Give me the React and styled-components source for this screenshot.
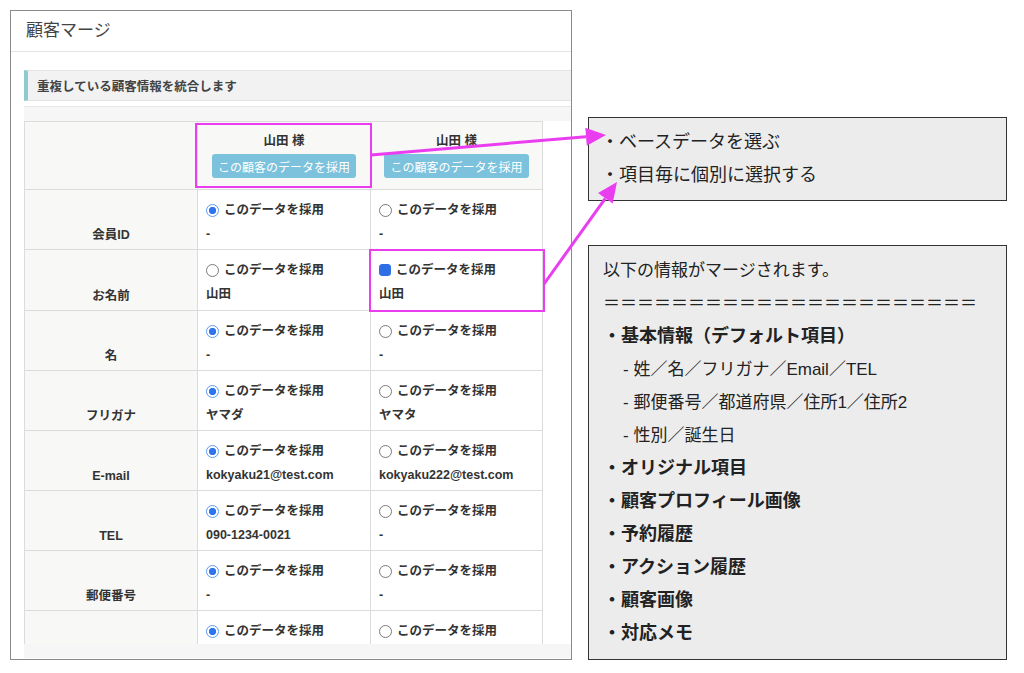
import styled, { createGlobalStyle } from "styled-components";

const GlobalStyle = createGlobalStyle`
  html, body {
    margin: 0;
    padding: 0;
    background: #fff;
  }
  body {
    font-family: "Liberation Sans", "Noto Sans CJK JP", sans-serif;
    color: #333;
  }
`;

const Page = styled.div`
  position: relative;
  width: 1024px;
  height: 673px;
  box-sizing: border-box;
  padding: 10px 0 0 10px;
  display: flex;
  align-items: flex-start;
  gap: 16px;
  overflow: hidden;
`;

const Frame = styled.div`
  flex: none;
  width: 562px;
  height: 650px;
  box-sizing: border-box;
  border: 1px solid #8a8a8a;
  background: #fff;
  overflow: hidden;
`;

const FrameHeader = styled.div`
  height: 41px;
  box-sizing: border-box;
  padding: 0 15px 6px;
  display: flex;
  align-items: center;
  border-bottom: 1px solid #e2e2e2;
  font-size: 17px;
  color: #444;
`;

const FrameBody = styled.div`
  width: 660px;
  padding: 18px 0 0 13px;
`;

const InfoBar = styled.div`
  height: 31px;
  box-sizing: border-box;
  display: flex;
  align-items: center;
  padding-left: 9px;
  border: 1px solid #e3e3e3;
  border-left: 4px solid #8fcad1;
  background: #f2f2f2;
  font-size: 12.5px;
  font-weight: bold;
  color: #444;
`;

const Panel = styled.div`
  margin-top: 5px;
  border-top: 1px solid #e6e6e6;
  background: #f6f6f6;
  padding: 14px 0 14px;
`;

const TableArea = styled.div`
  height: 523px;
  background: #fff;
  overflow: hidden;
`;

const MergeGrid = styled.div`
  display: grid;
  grid-template-columns: 173px 173px 172px;
  grid-template-rows: 68px 60px 61px 60px;
  grid-auto-rows: 60px;
  width: max-content;
  border-top: 1px solid #dcdcdc;
  border-left: 1px solid #dcdcdc;
  font-size: 12.5px;
  font-weight: bold;
  color: #333;
  line-height: 18px;
`;

const Cell = styled.div`
  box-sizing: border-box;
  border-right: 1px solid #dcdcdc;
  border-bottom: 1px solid #dcdcdc;
  background: ${(p) => (p.$shaded ? "#f8f9f7" : "#fff")};
`;

const HeadCell = styled(Cell)`
  display: flex;
  flex-direction: column;
  align-items: center;
  padding-top: 10px;
`;

const LabelCell = styled(Cell)`
  display: flex;
  align-items: flex-end;
  justify-content: center;
  padding-bottom: 5px;
`;

const DataCell = styled(Cell)`
  padding: 11px 8px 0;
`;

const AdoptButton = styled.button`
  margin-top: 4px;
  height: 24px;
  padding: 0 6px;
  border: none;
  border-radius: 3px;
  background: #7cc2dc;
  color: #fff;
  font-family: inherit;
  font-size: 12px;
  font-weight: normal;
  white-space: nowrap;
`;

const RadioRow = styled.label`
  display: flex;
  align-items: center;
  gap: 5px;
  height: 18px;
  white-space: nowrap;
`;

const RadioMark = styled.span`
  flex: none;
  width: 13px;
  height: 13px;
  box-sizing: border-box;
  border-radius: 50%;
  border: 1px solid ${(p) => (p.$checked ? "#5b9af5" : "#7a7a7a")};
  background: ${(p) =>
    p.$checked
      ? "radial-gradient(circle, #2f74ef 0 3.4px, #fff 3.9px)"
      : "#fff"};

  ${(p) =>
    p.$focus &&
    `
    width: 12px;
    height: 12px;
    border-radius: 3px;
    border-color: #2f6fe6;
    background: #2f6fe6;
  `}
`;

const Value = styled.div`
  margin-top: 6px;
  white-space: nowrap;
`;

const Notes = styled.div`
  flex: none;
  display: flex;
  flex-direction: column;
  gap: 44px;
  padding-top: 107px;
`;

const NoteBox = styled.div`
  width: 419px;
  box-sizing: border-box;
  border: 1px solid #333;
  background: #ececec;
  padding: 8px ${(p) => p.$padX}px ${(p) => p.$padBottom}px;
  line-height: 33px;
  color: #222;
`;

const NoteLine = styled.div`
  font-size: ${(p) => (p.$bold ? 18 : p.$size || 17)}px;
  font-weight: ${(p) => (p.$bold ? "bold" : "normal")};
  padding-left: ${(p) => (p.$indent ? 20 : 0)}px;
  white-space: nowrap;
`;

const Overlay = styled.svg`
  position: absolute;
  top: 0;
  left: 0;
  pointer-events: none;
`;

const rows = [
  { label: "会員ID", pick: 0, values: ["-", "-"] },
  { label: "お名前", pick: 1, focus: true, values: ["山田", "山田"] },
  { label: "名", pick: 0, values: ["-", "-"] },
  { label: "フリガナ", pick: 0, values: ["ヤマダ", "ヤマタ"] },
  { label: "E-mail", pick: 0, values: ["kokyaku21@test.com", "kokyaku222@test.com"] },
  { label: "TEL", pick: 0, values: ["090-1234-0021", "-"] },
  { label: "郵便番号", pick: 0, values: ["-", "-"] },
  { label: "", pick: 0, values: ["", ""] },
];

const mergeItems = [
  { text: "以下の情報がマージされます。" },
  { text: "＝＝＝＝＝＝＝＝＝＝＝＝＝＝＝＝＝＝＝＝＝＝" },
  { text: "・基本情報（デフォルト項目）", bold: true },
  { text: "- 姓／名／フリガナ／Email／TEL", indent: true },
  { text: "- 郵便番号／都道府県／住所1／住所2", indent: true },
  { text: "- 性別／誕生日", indent: true },
  { text: "・オリジナル項目", bold: true },
  { text: "・顧客プロフィール画像", bold: true },
  { text: "・予約履歴", bold: true },
  { text: "・アクション履歴", bold: true },
  { text: "・顧客画像", bold: true },
  { text: "・対応メモ", bold: true },
];

const MAGENTA = "#ea3df0";

function Arrow({ x1, y1, x2, y2 }) {
  const dx = x2 - x1;
  const dy = y2 - y1;
  const len = Math.hypot(dx, dy);
  const ux = dx / len;
  const uy = dy / len;
  const bx = x2 - ux * 20;
  const by = y2 - uy * 20;
  const nx = -uy * 9;
  const ny = ux * 9;
  return (
    <g>
      <line x1={x1} y1={y1} x2={bx} y2={by} stroke={MAGENTA} strokeWidth="3" />
      <polygon
        points={`${x2},${y2} ${bx + nx},${by + ny} ${bx - nx},${by - ny}`}
        fill={MAGENTA}
      />
    </g>
  );
}

export default function App() {
  return (
    <>
      <GlobalStyle />
      <Page>
        <Frame>
          <FrameHeader>顧客マージ</FrameHeader>
          <FrameBody>
            <InfoBar>重複している顧客情報を統合します</InfoBar>
            <Panel>
              <TableArea>
                <MergeGrid>
                  <Cell $shaded />
                  {[0, 1].map((i) => (
                    <HeadCell $shaded key={i}>
                      <div>山田 様</div>
                      <AdoptButton>この顧客のデータを採用</AdoptButton>
                    </HeadCell>
                  ))}
                  {rows.map((row, r) => [
                    <LabelCell $shaded key={`l${r}`}>
                      {row.label}
                    </LabelCell>,
                    ...row.values.map((v, i) => (
                      <DataCell key={`d${r}-${i}`}>
                        <RadioRow>
                          <RadioMark
                            $checked={row.pick === i}
                            $focus={row.focus && row.pick === i}
                          />
                          このデータを採用
                        </RadioRow>
                        {v && <Value>{v}</Value>}
                      </DataCell>
                    )),
                  ])}
                </MergeGrid>
              </TableArea>
            </Panel>
          </FrameBody>
        </Frame>

        <Notes>
          <NoteBox $padX={12} $padBottom={8}>
            <NoteLine $size={18}>・ベースデータを選ぶ</NoteLine>
            <NoteLine $size={18}>・項目毎に個別に選択する</NoteLine>
          </NoteBox>
          <NoteBox $padX={14} $padBottom={9}>
            {mergeItems.map((item, i) => (
              <NoteLine key={i} $bold={item.bold} $indent={item.indent}>
                {item.text}
              </NoteLine>
            ))}
          </NoteBox>
        </Notes>

        <Overlay width="1024" height="673" viewBox="0 0 1024 673">
          <rect x="196" y="124" width="175" height="63" fill="none" stroke={MAGENTA} strokeWidth="2" />
          <rect x="370" y="250" width="174" height="61" fill="none" stroke={MAGENTA} strokeWidth="2" />
          <Arrow x1={371} y1={155} x2={606} y2={135} />
          <Arrow x1={544} y1={284} x2={617} y2={182} />
        </Overlay>
      </Page>
    </>
  );
}
